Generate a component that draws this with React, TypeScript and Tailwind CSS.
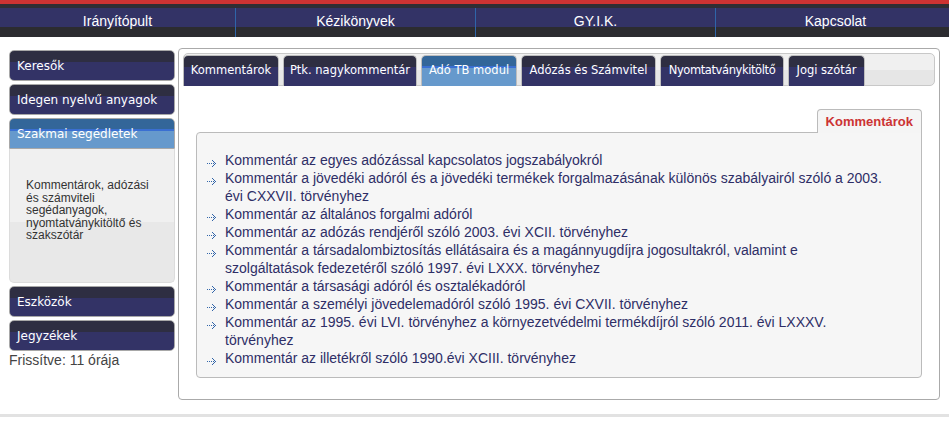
import React from "react";

const navItems = ["Irányítópult", "Kézikönyvek", "GY.I.K.", "Kapcsolat"];

const tabs = [
  { label: "Kommentárok", active: false, w: "w-[96px]" },
  { label: "Ptk. nagykommentár", active: false, w: "w-[134px]" },
  { label: "Adó TB modul", active: true, w: "w-[96px]" },
  { label: "Adózás és Számvitel", active: false, w: "w-[135px]" },
  { label: "Nyomtatványkitöltő", active: false, w: "w-[124px] tracking-[-0.4px]" },
  { label: "Jogi szótár", active: false, w: "w-[77px]" },
];

const items = [
  "Kommentár az egyes adózással kapcsolatos jogszabályokról",
  "Kommentár a jövedéki adóról és a jövedéki termékek forgalmazásának különös szabályairól szóló a 2003. évi CXXVII. törvényhez",
  "Kommentár az általános forgalmi adóról",
  "Kommentár az adózás rendjéről szóló 2003. évi XCII. törvényhez",
  "Kommentár a társadalombiztosítás ellátásaira és a magánnyugdíjra jogosultakról, valamint e szolgáltatások fedezetéről szóló 1997. évi LXXX. törvényhez",
  "Kommentár a társasági adóról és osztalékadóról",
  "Kommentár a személyi jövedelemadóról szóló 1995. évi CXVII. törvényhez",
  "Kommentár az 1995. évi LVI. törvényhez a környezetvédelmi termékdíjról szóló 2011. évi LXXXV. törvényhez",
  "Kommentár az illetékről szóló 1990.évi XCIII. törvényhez",
];

const darkBtn =
  "bg-[linear-gradient(to_bottom,#2e2e42_0,#2e2e42_11px,#333366_11px,#333366_100%)]";
const activeBtn =
  "bg-[linear-gradient(to_bottom,#336699_0,#336699_10px,#3a6fd2_10px,#3a6fd2_12px,#6699cc_12px,#6699cc_100%)]";

function SideButton({ label, active }: { label: string; active?: boolean }) {
  return (
    <div
      className={`h-[31px] flex items-center pl-[7px] pt-[1px] text-white text-[12px] border border-[#a8a8a8] ${
        active ? `rounded-t-[5px] ${activeBtn}` : `rounded-[5px] ${darkBtn}`
      }`}
    >
      {label}
    </div>
  );
}

// small dotted arrow used as list bullet
function Bullet() {
  const dots = [
    [0, 3], [2, 3], [4, 3], [6, 3], [8, 3],
    [5, 0], [6, 1], [7, 2], [7, 4], [6, 5], [5, 6],
  ];
  return (
    <svg width="10" height="7" viewBox="0 0 10 7" className="shrink-0 mt-[9px]">
      {dots.map(([x, y], i) => (
        <rect key={i} x={x} y={y} width="1" height="1" fill="#3366aa" />
      ))}
    </svg>
  );
}

export default function App() {
  return (
    <div className="w-[949px] h-[421px] bg-white overflow-hidden font-['Liberation_Sans',Arial,sans-serif]">
      {/* header */}
      <div className="h-[4px] bg-[#cc3333]" />
      <div className="h-[33px] bg-[#2e2e34] pt-[4px] overflow-hidden">
        <div className="grid grid-cols-[235px_240px_240px_240px] h-[29px] bg-[linear-gradient(to_bottom,#333366_0,#333366_19px,#2c2c30_19px,#2c2c30_100%)]">
          {navItems.map((n, i) => (
            <div
              key={n}
              className={`text-center text-white text-[14px] leading-[16px] pt-[5px] ${
                i > 0 ? "border-l border-[#2f65a8]" : ""
              }`}
            >
              {n}
            </div>
          ))}
        </div>
      </div>

      {/* body */}
      <div className="flex gap-[3px] px-[9px] pt-[11px]">
        <aside className="w-[166px] shrink-0 mt-[2px] flex flex-col font-['DejaVu_Sans',Verdana,sans-serif]">
          <SideButton label="Keresők" />
          <div className="h-[3px]" />
          <SideButton label="Idegen nyelvű anyagok" />
          <div className="h-[3px]" />
          <SideButton label="Szakmai segédletek" active />
          <div className="h-[134px] border border-t-0 border-[#dcdcdc] rounded-b-[5px] bg-[linear-gradient(to_bottom,#f0f0f0_0,#f0f0f0_55%,#e8e8e8_55%,#e8e8e8_100%)] pl-[16px] pt-[30px]">
            <p className="w-[132px] text-[12px] leading-[12.5px] text-[#333333] font-['Liberation_Sans',Arial,sans-serif]">
              Kommentárok, adózási és számviteli segédanyagok, nyomtatványkitöltő és szakszótár
            </p>
          </div>
          <div className="h-[3px]" />
          <SideButton label="Eszközök" />
          <div className="h-[3px]" />
          <SideButton label="Jegyzékek" />
          <p className="pt-[1px] text-[14px] leading-[16px] text-[#444444] font-['Liberation_Sans',Arial,sans-serif]">
            Frissítve: 11 órája
          </p>
        </aside>

        <main className="flex-1 h-[352px] border border-[#aaaaaa] rounded-[4px] p-[4px]">
          <div className="h-[33px] flex items-end gap-[4px] border border-[#c8c8c8] rounded-[5px] bg-[linear-gradient(to_bottom,#f0f0f0_0,#f0f0f0_50%,#e6e6e6_50%,#e6e6e6_100%)] font-['DejaVu_Sans',Verdana,sans-serif]">
            {tabs.map((t, i) => (
              <div
                key={t.label}
                className={`h-[31px] -mb-px flex items-center justify-center whitespace-nowrap text-white text-[11.5px] rounded-t-[5px] border border-b-0 border-[#bdbdbd] ${t.w} ${
                  i === 0 ? "-ml-px" : ""
                } ${t.active ? activeBtn : darkBtn}`}
              >
                {t.label}
              </div>
            ))}
          </div>

          <div className="px-[13px] pt-[23px] flex flex-col">
            <div className="self-end h-[24px] -mb-px relative px-[8px] flex items-center border border-b-0 border-[#bbbbbb] rounded-t-[4px] bg-[#f5f5f5] text-[13px] font-bold text-[#cc3333]">
              Kommentárok
            </div>
            <div className="h-[246px] border border-[#bbbbbb] rounded-tl-[4px] rounded-b-[4px] bg-[#f6f6f6] pt-[18px] pl-[10px] pr-[34px]">
              <ul className="flex flex-col">
                {items.map((it) => (
                  <li key={it} className="flex gap-[8px] text-[14px] leading-[18px] text-[#2e2e66]">
                    <Bullet />
                    <span>{it}</span>
                  </li>
                ))}
              </ul>
            </div>
          </div>
        </main>
      </div>

      <div className="mt-[14px] h-[3px] bg-[#e2e2e2]" />
    </div>
  );
}
